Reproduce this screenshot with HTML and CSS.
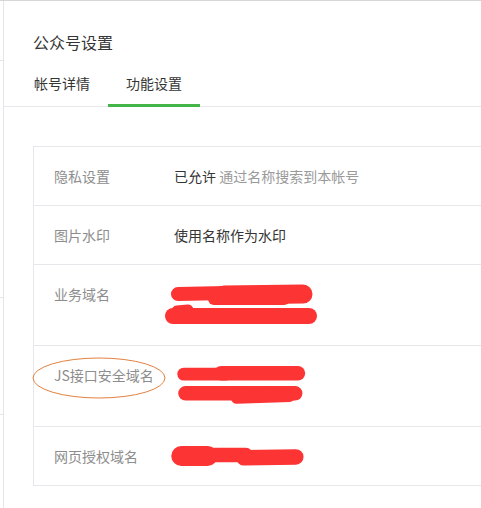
FILE: index.html
```html
<!DOCTYPE html>
<html lang="zh-CN">
<head>
<meta charset="utf-8">
<title>公众号设置</title>
<link rel="stylesheet" href="styles.css">
</head>
<body>
<div class="frame">
  <div class="side">
    <div class="tick tick-1"></div>
    <div class="tick tick-2"></div>
    <div class="tick tick-3"></div>
  </div>
  <div class="main">
    <h1 class="title">公众号设置</h1>
    <div class="tabs">
      <div class="tab">帐号详情</div>
      <div class="tab active">功能设置</div>
    </div>
    <div class="table">
      <div class="row">
        <div class="label">隐私设置</div>
        <div class="value">已允许 <span class="hint">通过名称搜索到本帐号</span></div>
      </div>
      <div class="row">
        <div class="label">图片水印</div>
        <div class="value">使用名称作为水印</div>
      </div>
      <div class="row">
        <div class="label">业务域名</div>
        <div class="value">
          <svg class="scribble two" width="160" height="42" viewBox="0 0 160 42">
            <g stroke="#fd3434" stroke-linecap="round" fill="none">
              <path d="M14 10 L62 9" stroke-width="14"/>
              <path d="M60 11 L139 10" stroke-width="19"/>
              <path d="M50 15 L120 15" stroke-width="12"/>
              <path d="M9 32 L145 32" stroke-width="16"/>
              <path d="M13 27 L24 26" stroke-width="11"/>
            </g>
          </svg>
        </div>
      </div>
      <div class="row">
        <div class="label js">JS接口安全域名
          <svg class="ring" width="136" height="44" viewBox="0 0 136 44">
            <ellipse cx="67" cy="21" rx="66" ry="20" fill="none" stroke="#e2813f" stroke-width="1"/>
          </svg>
        </div>
        <div class="value">
          <svg class="scribble two" width="160" height="46" viewBox="0 0 160 46">
            <g stroke="#fd3434" stroke-linecap="round" fill="none">
              <path d="M14 10 L60 10" stroke-width="14"/>
              <path d="M55 9 L139 9" stroke-width="16"/>
              <path d="M16 31 L136 31" stroke-width="16"/>
              <path d="M72 36 L130 34" stroke-width="13"/>
            </g>
          </svg>
        </div>
      </div>
      <div class="row">
        <div class="label">网页授权域名</div>
        <div class="value">
          <svg class="scribble one" width="160" height="22" viewBox="0 0 160 22">
            <g stroke="#fd3434" stroke-linecap="round" fill="none">
              <path d="M11 11 L40 11" stroke-width="22"/>
              <path d="M38 10 L82 10" stroke-width="16"/>
              <path d="M80 13 L137 12" stroke-width="17"/>
            </g>
          </svg>
        </div>
      </div>
    </div>
  </div>
</div>
</body>
</html>
```

FILE: styles.css
```css
html, body {
  margin: 0;
  padding: 0;
  background: #ffffff;
}

body {
  width: 481px;
  height: 508px;
  overflow: hidden;
  font-family: "Noto Sans CJK SC", "Noto Sans", sans-serif;
  color: #353535;
}

.frame {
  display: flex;
  border-top: 1px solid #d6d6d8;
  height: 507px;
}

.side {
  width: 3px;
  flex: none;
  border-right: 1px solid #e6e6e8;
}

.tick {
  height: 1px;
  background: #e6e6e8;
}

.tick-1 { margin-top: 59px; }
.tick-2 { margin-top: 236px; }
.tick-3 { margin-top: 116px; }

.main {
  flex: 1;
  min-width: 0;
  padding-left: 29px;
  overflow: hidden;
}

.title {
  margin: 0;
  padding-top: 30px;
  font-size: 16px;
  line-height: 22px;
  font-weight: normal;
  color: #353535;
}

.tabs {
  display: flex;
  margin-top: 10px;
  margin-left: -29px;
  padding-left: 30px;
  border-bottom: 1px solid #e7e7eb;
}

.tab {
  font-size: 14px;
  line-height: 41px;
  padding: 0 18px;
  border-bottom: 3px solid transparent;
  margin-bottom: -1px;
  color: #353535;
}

.tab:first-child {
  padding-left: 0;
}

.tab.active {
  border-bottom-color: #44b549;
}

.table {
  margin-top: 39px;
  width: 480px;
  border-top: 1px solid #e7e7eb;
  border-left: 1px solid #e7e7eb;
}

.row {
  display: flex;
  border-bottom: 1px solid #e7e7eb;
}

.label {
  position: relative;
  width: 120px;
  flex: none;
  padding: 19px 0 19px 20px;
  font-size: 14px;
  line-height: 20px;
  color: #8d8d8d;
}

.value {
  flex: 1;
  padding: 19px 0;
  font-size: 14px;
  line-height: 20px;
  color: #353535;
}

.hint {
  color: #9a9a9a;
}

.scribble {
  display: block;
  margin-left: -10px;
  overflow: visible;
}

.scribble.two {
  height: 42px;
}

.scribble.one {
  height: 20px;
}

.ring {
  position: absolute;
  left: -2px;
  top: 11px;
  overflow: visible;
}
```
